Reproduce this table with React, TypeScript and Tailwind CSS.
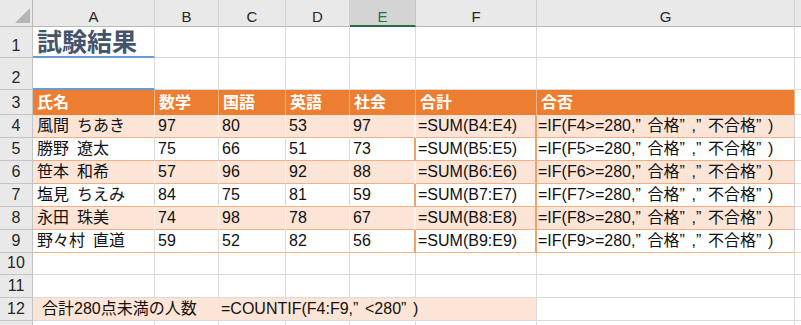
import React from 'react';

const COLS = [
    { k: 'A', w: 'w-[122px]' },
    { k: 'B', w: 'w-[64px]' },
    { k: 'C', w: 'w-[67px]' },
    { k: 'D', w: 'w-[64px]' },
    { k: 'E', w: 'w-[66px]' },
    { k: 'F', w: 'w-[121px]' },
    { k: 'G', w: 'w-[258px]' },
];

const PEOPLE: [string, number[]][] = [
    ['風間\u2002ちあき', [97, 80, 53, 97]],
    ['勝野\u2002遼太', [75, 66, 51, 73]],
    ['笹本\u2002和希', [57, 96, 92, 88]],
    ['塩見\u2002ちえみ', [84, 75, 81, 59]],
    ['永田\u2002珠美', [74, 98, 78, 67]],
    ['野々村\u2002直道', [59, 52, 82, 56]],
];

const HEADS = ['氏名', '数学', '国語', '英語', '社会', '合計', '合否'];

// wide closing quote as in the original sheet
const Q = () => <span className="inline-block w-[12px] text-left">”</span>;

const RowHead = ({ n }: { n?: number }) => (
    <div className="w-[33px] shrink-0 h-full flex items-end justify-center pb-[3px] bg-[#e9e9e9] border-r border-b border-[#c4c4c4] text-[16px] leading-none text-[#262626]">
        {n}
    </div>
);

const Tail = ({ className = '' }: { className?: string }) => (
    <div className={`flex-1 h-full border-b border-[#dadada] ${className}`} />
);

export default function App() {
    return (
        <div className="w-[801px] h-[325px] overflow-hidden bg-white font-['Liberation_Sans','Noto_Sans_CJK_JP',sans-serif] text-[#111]">
            {/* column letters */}
            <div className="flex h-[27px] bg-[#e9e9e9] text-[15px] leading-none text-[#262626]">
                <div className="w-[33px] shrink-0 h-full relative border-r border-b border-[#b9b9b9]">
                    <svg className="absolute right-[2px] bottom-[3px]" width="15" height="15" viewBox="0 0 15 15">
                        <polygon points="15,0 15,15 0,15" fill="#b5b5b5" />
                    </svg>
                </div>
                {COLS.map(c => (
                    <div
                        key={c.k}
                        className={`${c.w} shrink-0 h-full flex items-end justify-center border-r ${c.k === 'E'
                            ? 'bg-[#d4d4d4] text-[#217346] border-b-2 border-b-[#217346] border-r-[#c6c6c6] pb-[1px]'
                            : 'border-b border-[#b9b9b9] border-r-[#cfcfcf] pb-[2px]'}`}
                    >
                        {c.k}
                    </div>
                ))}
                <div className="flex-1 h-full border-b border-[#b9b9b9]" />
            </div>

            {/* row 1: title */}
            <div className="flex h-[31px]">
                <RowHead n={1} />
                <div className="w-[122px] shrink-0 h-full flex items-end pl-[4px] pb-[1px] border-r border-[#dadada] border-b-2 border-b-[#6a9ad3] text-[25px] leading-none font-bold text-[#44546a]">
                    試験結果
                </div>
                {COLS.slice(1).map(c => (
                    <div key={c.k} className={`${c.w} shrink-0 h-full border-r border-b border-[#dadada]`} />
                ))}
                <Tail />
            </div>

            {/* row 2 */}
            <div className="flex h-[32px]">
                <RowHead n={2} />
                <div className="w-[122px] shrink-0 h-full border-r border-[#dadada] border-b-2 border-b-[#6a9ad3]" />
                {COLS.slice(1).map(c => (
                    <div key={c.k} className={`${c.w} shrink-0 h-full border-r border-b border-[#dadada]`} />
                ))}
                <Tail />
            </div>

            {/* row 3: table header */}
            <div className="flex h-[25px]">
                <RowHead n={3} />
                {COLS.map((c, i) => (
                    <div
                        key={c.k}
                        className={`${c.w} shrink-0 h-full flex items-center px-[4px] bg-[#ed7d31] border-r border-r-[#f6b48a] text-[16px] leading-none font-bold text-white`}
                    >
                        {HEADS[i]}
                    </div>
                ))}
                <Tail />
            </div>

            {/* rows 4-9 */}
            {PEOPLE.map(([name, sc], i) => {
                const r = i + 4;
                const band = i % 2 === 0 ? 'bg-[#fce4d6] border-r-[#fdf3ec]' : 'bg-white border-r-[#dcdcdc]';
                return (
                    <div key={r} className="flex h-[23px] text-[16px] leading-none">
                        <RowHead n={r} />
                        <div className={`w-[122px] shrink-0 h-full flex items-end pl-[4px] pb-[3px] border-r border-b border-b-[#f4b084] ${band}`}>
                            {name}
                        </div>
                        {sc.map((v, j) => (
                            <div
                                key={j}
                                className={`${COLS[j + 1].w} shrink-0 h-full flex items-end pl-[3px] pb-[3px] border-b border-b-[#f4b084] ${band} ${j === 3 ? 'border-r-2 border-r-[#f2a26e]' : 'border-r'}`}
                            >
                                {v}
                            </div>
                        ))}
                        <div className={`w-[121px] shrink-0 h-full flex items-end pl-[2px] pb-[3px] border-r-2 border-r-[#f2a26e] border-b border-b-[#f4b084] ${i % 2 === 0 ? 'bg-[#fce4d6]' : 'bg-white'}`}>
                            =SUM(B{r}:E{r})
                        </div>
                        <div className={`w-[258px] shrink-0 h-full flex items-end pl-[1px] pb-[3px] border-r border-r-[#d0d0d0] border-b border-b-[#f4b084] whitespace-nowrap ${i % 2 === 0 ? 'bg-[#fce4d6]' : 'bg-white'}`}>
                            <span>=IF(F{r}&gt;=280,<Q />合格<Q />,<Q />不合格<Q />)</span>
                        </div>
                        <Tail />
                    </div>
                );
            })}

            {/* rows 10-11 */}
            {[10, 11].map(r => (
                <div key={r} className={`flex ${r === 10 ? 'h-[22px]' : 'h-[23px]'}`}>
                    <RowHead n={r} />
                    {COLS.map(c => (
                        <div key={c.k} className={`${c.w} shrink-0 h-full border-r border-b border-[#dadada]`} />
                    ))}
                    <Tail />
                </div>
            ))}

            {/* row 12: count */}
            <div className="flex h-[23px] text-[16px] leading-none">
                <RowHead n={12} />
                <div className="w-[504px] shrink-0 h-full flex items-end pb-[3px] bg-[#fce4d6] border-r border-b border-[#dadada] whitespace-nowrap">
                    <span className="w-[188px] shrink-0 pl-[9px]">合計280点未満の人数</span>
                    <span>=COUNTIF(F4:F9,<Q />&lt;280<Q />)</span>
                </div>
                <div className="w-[258px] shrink-0 h-full border-r border-b border-[#dadada]" />
                <Tail />
            </div>

            {/* row 13 (clipped at bottom) */}
            <div className="flex h-[23px]">
                <RowHead />
                {COLS.map(c => (
                    <div key={c.k} className={`${c.w} shrink-0 h-full border-r border-b border-[#dadada]`} />
                ))}
                <Tail />
            </div>
        </div>
    );
}
